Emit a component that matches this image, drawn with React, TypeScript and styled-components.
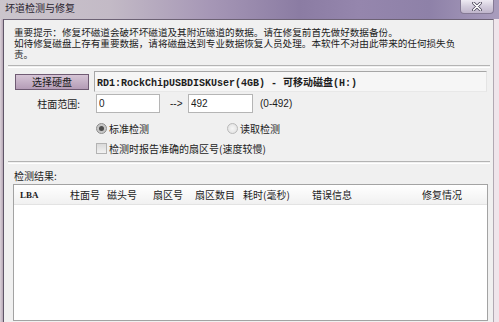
import React from 'react';
import styled, { createGlobalStyle } from 'styled-components';

const GlobalStyle = createGlobalStyle`
    html, body {
        margin: 0;
        padding: 0;
        background: #fff;
    }
`;

const CJK = `"Noto Sans CJK SC", "Liberation Sans", sans-serif`;

const Window = styled.div`
    width: 499px;
    height: 322px;
    overflow: hidden;
    display: flex;
    flex-direction: column;
    font-family: ${CJK};
    font-size: 10px;
    color: #1c1c1c;
    background: #cfc4cd;
`;

const TitleBar = styled.div`
    height: 19px;
    flex: none;
    display: flex;
    align-items: flex-start;
    justify-content: space-between;
    background: linear-gradient(
        90deg,
        #cbc5cc 0%,
        #c3bac6 22%,
        #a697b6 42%,
        #8b7ca3 60%,
        #9586ad 72%,
        #8e81a8 86%,
        #a99dbd 100%
    );
`;

const Title = styled.span`
    padding: 2px 0 0 5px;
    line-height: 12px;
    color: #2a2430;
`;

const CloseButton = styled.div`
    width: 34px;
    height: 14px;
    margin-right: 5px;
    box-sizing: border-box;
    display: flex;
    align-items: center;
    justify-content: center;
    border: 1px solid #857a95;
    border-top: none;
    border-radius: 0 0 4px 4px;
    background: linear-gradient(#eeeaf2, #d3ccdc 50%, #bfb5cb);
`;

const Body = styled.div`
    flex: 1;
    min-height: 0;
    display: flex;
`;

const LeftFrame = styled.div`
    width: 3px;
    background: linear-gradient(90deg, #dbd2da, #b7a8b6);
`;

const RightFrame = styled.div`
    width: 5px;
    background: #efe5eb;
`;

const Client = styled.div`
    flex: 1;
    display: flex;
    flex-direction: column;
    background: #f0f0f0;
    border-left: 1px solid #5f5668;
    border-top: 1px solid #6d6275;
    border-right: 1px solid #b1a9b3;
`;

/* Latin font first keeps the line boxes tight; the CJK glyphs fall back to Noto */
const Notice = styled.div`
    padding: 7px 0 0 10px;
    font-family: "Liberation Sans", "Noto Sans CJK SC", sans-serif;
    font-size: 9.6px;
    line-height: 11px;
    white-space: nowrap;
`;

const Separator = styled.div<{ $top: number }>`
    margin: ${(p) => p.$top}px 3px 0 4px;
    height: 1px;
    border-top: 1px solid #b4b4b4;
    border-bottom: 1px solid #ffffff;
`;

const Form = styled.div`
    display: flex;
    flex-direction: column;
    margin-top: 3px;
    padding: 0 6px 0 11px;
`;

const DiskRow = styled.div`
    display: flex;
    align-items: center;
    gap: 5px;
    height: 21px;
`;

const PickButton = styled.button`
    width: 74px;
    height: 16px;
    padding: 0;
    box-sizing: border-box;
    border: 1px solid #6f5b73;
    background: linear-gradient(#d6c5d6, #b49cb6);
    font-family: ${CJK};
    font-size: 10px;
    line-height: 14px;
    color: #1a1a1a;
`;

const DiskField = styled.div`
    flex: 1;
    height: 21px;
    box-sizing: border-box;
    padding-left: 2px;
    border: 1px solid;
    border-color: #a6a6a6 #e4e4e4 #e8e8e8 #a6a6a6;
    background: #f6f6f6;
    font-family: "Liberation Mono", monospace;
    font-weight: bold;
    font-size: 10px;
    line-height: 19px;
    white-space: pre;

    span {
        font-family: ${CJK};
    }
`;

const Row = styled.div<{ $top: number; $h: number; $indent?: number }>`
    display: flex;
    align-items: center;
    margin-top: ${(p) => p.$top}px;
    height: ${(p) => p.$h}px;
    padding-left: ${(p) => p.$indent ?? 0}px;
    white-space: nowrap;
`;

const FieldLabel = styled.span`
    width: 65px;
    text-align: right;
    margin-right: 16px;
`;

const TextBox = styled.input<{ $w: number }>`
    width: ${(p) => p.$w}px;
    height: 19px;
    box-sizing: border-box;
    padding: 0 0 0 2px;
    border: 1px solid #b5b5b5;
    background: #fff;
    font-family: "Liberation Sans", sans-serif;
    font-size: 10px;
    color: #1c1c1c;
    outline: none;
`;

const Arrow = styled.span`
    width: 18px;
    margin-left: 10px;
    font-family: "Liberation Sans", sans-serif;
`;

const RangeHint = styled.span`
    margin-left: 7px;
    font-family: "Liberation Sans", sans-serif;
`;

const Option = styled.label<{ $w?: number }>`
    display: flex;
    align-items: center;
    gap: 2px;
    width: ${(p) => (p.$w ? `${p.$w}px` : 'auto')};
`;

const Radio = styled.span<{ $checked?: boolean }>`
    width: 11px;
    height: 11px;
    box-sizing: border-box;
    border-radius: 50%;
    display: flex;
    align-items: center;
    justify-content: center;
    border: 1px solid ${(p) => (p.$checked ? '#8c8c8c' : '#b9b9b9')};
    background: ${(p) =>
        p.$checked
            ? 'radial-gradient(circle, #bdbdbd, #cfcfcf)'
            : 'radial-gradient(circle, #f6f6f6, #dedede)'};

    &::after {
        content: '';
        display: ${(p) => (p.$checked ? 'block' : 'none')};
        width: 5px;
        height: 5px;
        border-radius: 50%;
        background: #4d4d4d;
    }
`;

const Check = styled.span`
    width: 11px;
    height: 11px;
    box-sizing: border-box;
    border: 1px solid #b3b3b3;
    background: linear-gradient(#dadada, #f2f2f2);
`;

const ResultLabel = styled.div`
    margin-top: 6px;
    padding-left: 10px;
    line-height: 11px;
`;

const ListView = styled.div`
    flex: 1;
    margin: 3px 5px 1px 9px;
    border: 1px solid #a3a3a3;
    background: #fff;
`;

const ListHeader = styled.div`
    height: 20px;
    box-sizing: border-box;
    display: grid;
    grid-template-columns: 50px 37px 46px 42px 48px 69px 110px 1fr;
    align-items: center;
    border-bottom: 1px solid #e3e3e3;
    background: linear-gradient(#ffffff, #f1f1f1);
`;

const HeaderCell = styled.span<{ $latin?: boolean }>`
    padding-left: 6px;
    white-space: nowrap;
    font-family: ${(p) => (p.$latin ? '"Liberation Serif", serif' : CJK)};
    font-weight: ${(p) => (p.$latin ? 'bold' : 'normal')};
    font-size: ${(p) => (p.$latin ? '9px' : '10px')};
`;

const columns = ['柱面号', '磁头号', '扇区号', '扇区数目', '耗时(毫秒)', '错误信息', '修复情况'];

export default function App() {
    return (
        <Window>
            <GlobalStyle />
            <TitleBar>
                <Title>坏道检测与修复</Title>
                <CloseButton>
                    <svg width="10" height="9" viewBox="0 0 10 9">
                        <path d="M1.5 1 L8.5 8 M8.5 1 L1.5 8" stroke="#4a4458" strokeWidth="3" strokeLinecap="round" />
                        <path d="M1.5 1 L8.5 8 M8.5 1 L1.5 8" stroke="#ffffff" strokeWidth="1.6" strokeLinecap="round" />
                    </svg>
                </CloseButton>
            </TitleBar>
            <Body>
                <LeftFrame />
                <Client>
                    <Notice>
                        重要提示：修复坏磁道会破坏坏磁道及其附近磁道的数据。请在修复前首先做好数据备份。
                        <br />
                        如待修复磁盘上存有重要数据，请将磁盘送到专业数据恢复人员处理。本软件不对由此带来的任何损失负
                        <br />
                        责。
                    </Notice>
                    <Separator $top={5} />
                    <Form>
                        <DiskRow>
                            <PickButton>选择硬盘</PickButton>
                            <DiskField>
                                {'RD1:RockChipUSBDISKUser(4GB) - '}
                                <span>可移动磁盘</span>
                                {'(H:)'}
                            </DiskField>
                        </DiskRow>
                        <Row $top={2} $h={19}>
                            <FieldLabel>柱面范围:</FieldLabel>
                            <TextBox $w={64} defaultValue="0" readOnly />
                            <Arrow>--&gt;</Arrow>
                            <TextBox $w={65} defaultValue="492" readOnly />
                            <RangeHint>(0-492)</RangeHint>
                        </Row>
                        <Row $top={8} $h={15} $indent={81}>
                            <Option $w={131}>
                                <Radio $checked />
                                标准检测
                            </Option>
                            <Option>
                                <Radio />
                                读取检测
                            </Option>
                        </Row>
                        <Row $top={5} $h={15} $indent={81}>
                            <Option>
                                <Check />
                                检测时报告准确的扇区号(速度较慢)
                            </Option>
                        </Row>
                    </Form>
                    <Separator $top={5} />
                    <ResultLabel>检测结果:</ResultLabel>
                    <ListView>
                        <ListHeader>
                            <HeaderCell $latin>LBA</HeaderCell>
                            {columns.map((c) => (
                                <HeaderCell key={c}>{c}</HeaderCell>
                            ))}
                        </ListHeader>
                    </ListView>
                </Client>
                <RightFrame />
            </Body>
        </Window>
    );
}
